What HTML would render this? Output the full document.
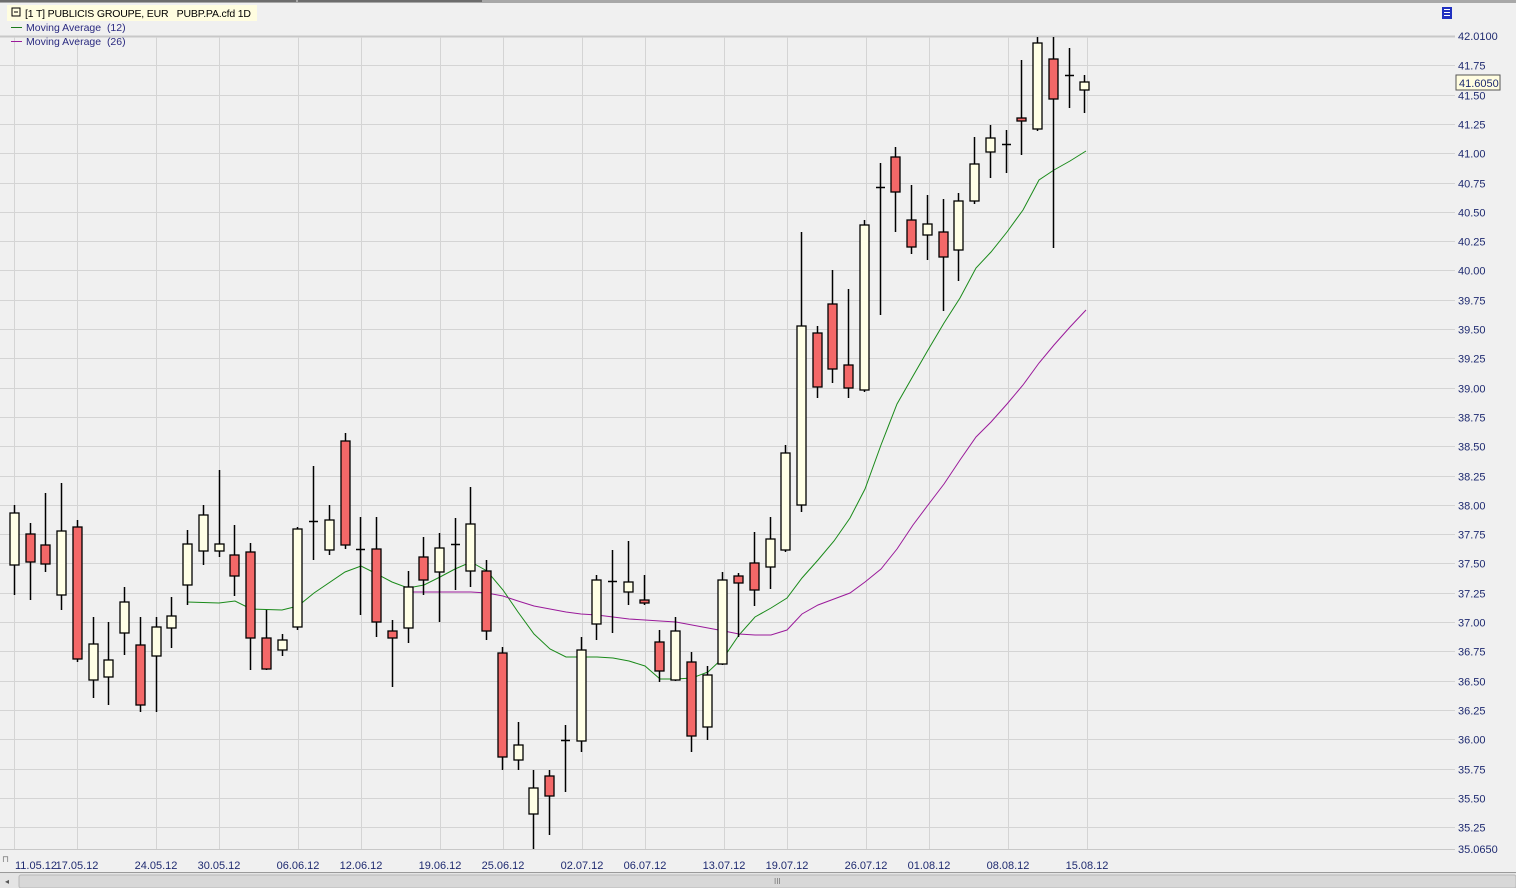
<!DOCTYPE html>
<html><head><meta charset="utf-8"><style>
html,body{margin:0;padding:0;background:#f0f0f0;width:1516px;height:888px;overflow:hidden;font-family:"Liberation Sans",Arial,sans-serif}
svg{position:absolute;left:0;top:0}
</style></head><body>
<svg id="s" width="1516" height="888" xmlns="http://www.w3.org/2000/svg" font-family="Liberation Sans, Arial, sans-serif">
<rect x="0" y="0" width="1516" height="888" fill="#f0f0f0"/>
<rect x="0" y="0" width="1516" height="3" fill="#a8a8a8"/>
<rect x="0" y="0" width="296" height="2" fill="#6d6d6d"/>
<rect x="298" y="0" width="184" height="2" fill="#6d6d6d"/>
<g id="grid"></g>
<g id="ma"></g>
<g id="c"></g>
<rect x="7" y="5" width="250" height="16" fill="#fffde0"/>
<rect x="12" y="8" width="8" height="8" fill="none" stroke="#000" stroke-width="1"/>
<line x1="14" y1="12" x2="18" y2="12" stroke="#000"/>
<text x="25" y="17" font-size="10.5" textLength="226" fill="#000">[1 T] PUBLICIS GROUPE, EUR &#160; PUBP.PA.cfd 1D</text>
<line x1="11" y1="27.5" x2="22" y2="27.5" stroke="#1a7a1a"/>
<text x="26" y="31" font-size="10.5" fill="#2a2a80">Moving Average &#160;(12)</text>
<line x1="11" y1="41.5" x2="22" y2="41.5" stroke="#9a1a9a"/>
<text x="26" y="45" font-size="10.5" fill="#2a2a80">Moving Average &#160;(26)</text>
<rect x="1442" y="7" width="10" height="12" fill="#2030c0"/>
<g stroke="#fff" stroke-width="1"><line x1="1444" y1="9.5" x2="1450" y2="9.5"/><line x1="1444" y1="12.5" x2="1450" y2="12.5"/><line x1="1444" y1="15.5" x2="1450" y2="15.5"/></g>
<g id="ax" font-size="11" fill="#1e2a70"></g>
<rect x="1456" y="75" width="44" height="15" fill="#fffde0" stroke="#555"/>
<text x="1459" y="87" font-size="11" fill="#1e2a70">41.6050</text>
<line x1="0" y1="872.5" x2="1516" y2="872.5" stroke="#9a9a9a"/>
<rect x="0" y="873" width="1516" height="15" fill="#e4e4e4"/>
<rect x="19" y="875" width="1497" height="13" rx="2" fill="#d8d8d8" stroke="#b8b8b8"/>
<text x="5" y="884" font-size="8" fill="#555">◂</text>
<text x="774" y="884" font-size="8" fill="#777">III</text>
<text x="2" y="862" font-size="9" fill="#777">⊓</text>
</svg>
<script>
const S='http://www.w3.org/2000/svg';
function el(p,t,a,txt){const e=document.createElementNS(S,t);for(const k in a)e.setAttribute(k,a[k]);if(txt)e.textContent=txt;document.getElementById(p).appendChild(e);return e;}
const Y=p=>37+(42-p)*117.2;
el('grid','line',{x1:0,y1:36.5,x2:1455,y2:36.5,stroke:'#c8c8c8','stroke-width':2});
el('ax','text',{x:1458,y:40},'42.0100');
for(let p=41.75;p>=35.2;p-=0.25){const y=Math.round(Y(p))-0.5;el('grid','line',{x1:0,y1:y,x2:1455,y2:y,stroke:'#d4d4d4'});el('ax','text',{x:1458,y:y+4},p.toFixed(2));}
el('grid','line',{x1:0,y1:849.5,x2:1455,y2:849.5,stroke:'#c8c8c8'});
el('ax','text',{x:1458,y:853},'35.0650');
const vx=[14,77,156,219,298,361,440,503,582,645,724,787,866,929,1008,1087];
const dl=['11.05.12','17.05.12','24.05.12','30.05.12','06.06.12','12.06.12','19.06.12','25.06.12','02.07.12','06.07.12','13.07.12','19.07.12','26.07.12','01.08.12','08.08.12','15.08.12'];
vx.forEach((x,i)=>{el('grid','line',{x1:x+0.5,y1:37,x2:x+0.5,y2:849,stroke:'#d4d4d4'});el('ax','text',{x:x+ (i==0?1:0),y:869,'text-anchor':i==0?'start':'middle'},dl[i]);});
const C=[['w',513,565,505,595],['r',534,562,523,600],['r',545,564,493,572],['w',531,595,483,610],['r',527,659,520,662],['w',644,680,617,698],['w',660,677,622,705],['w',602,633,587,655],['r',645,705,617,712],['w',627,656,617,712],['w',616,628,597,648],['w',544,585,530,605],['w',515,551,505,565],['w',544,551,470,557],['r',555,576,525,596],['r',552,638,543,670],['r',638,669,610,670],['w',640,650,634,656],['w',529,627,527,630],['r',521,523,466,560],['w',520,550,505,555],['r',441,545,433,549],['w',549,550,517,615],['r',549,622,517,637],['r',631,638,620,687],['w',587,628,571,643],['r',557,580,537,595],['w',548,572,533,622],['w',544,546,518,590],['w',524,571,487,587],['r',571,631,560,640],['r',653,757,647,770],['w',745,760,722,770],['w',788,814,770,849],['r',776,796,770,835],['w',740,741,725,792],['w',650,741,637,752],['w',580,624,575,640],['w',581,582,550,633],['w',582,592,541,605],['r',600,603,575,605],['r',642,671,630,682],['w',631,680,617,681],['r',662,736,652,752],['w',675,727,666,740],['w',580,664,572,665],['r',576,583,573,637],['r',563,590,532,606],['w',539,567,517,589],['w',453,550,445,552],['w',326,505,232,512],['r',333,387,326,398],['r',304,369,270,383],['r',365,388,289,398],['w',225,390,220,392],['w',187,188,163,315],['r',157,192,147,232],['r',220,247,185,254],['w',224,235,195,260],['r',232,257,199,311],['w',201,250,193,281],['w',164,201,137,204],['w',138,152,125,178],['w',144,146,130,173],['r',118,121,60,155],['w',43,129,37,131],['r',59,99,37,248],['w',75,76,48,108],['w',82,90,75,113]];
C.forEach((c,i)=>{const x=Math.round(14+15.74*i);
el('c','line',{x1:x+0.5,y1:c[3],x2:x+0.5,y2:c[4],stroke:'#000','stroke-width':1.5});
const h=c[2]-c[1];
if(h<=2){el('c','line',{x1:x-4,y1:c[1]+0.5,x2:x+5,y2:c[1]+0.5,stroke:'#000','stroke-width':1.5});}
else el('c','rect',{x:x-4,y:c[1],width:9,height:h,fill:c[0]=='w'?'#ffffe6':'#f36868',stroke:'#000','stroke-width':1.3});
});
const g=[[187,602],[219,603],[235,601],[251,609],[282,610],[298,606],[314,593],[345,572],[361,566],[377,574],[392,582],[408,588],[424,585],[440,577],[455,569],[471,562],[487,571],[503,590],[518,612],[534,634],[550,649],[566,657],[581,657],[597,657],[613,658],[629,661],[645,666],[660,679],[676,679],[692,678],[708,672],[724,657],[739,635],[755,617],[771,608],[787,598],[802,578],[818,560],[834,541],[850,518],[865,489],[881,445],[897,404],[913,376],[928,350],[944,323],[960,298],[976,268],[991,252],[1007,232],[1023,210],[1039,180],[1054,170],[1070,161],[1086,151]];
const m=[[408,592],[424,592],[440,592],[455,592],[471,592],[487,593],[503,596],[518,601],[534,606],[550,609],[566,612],[581,614],[597,615],[613,617],[629,619],[645,620],[660,621],[676,622],[692,625],[708,628],[724,631],[739,634],[755,635],[771,635],[787,630],[802,614],[818,605],[834,599],[850,593],[865,582],[881,569],[897,549],[913,525],[928,505],[944,484],[960,460],[976,437],[991,422],[1007,404],[1023,385],[1039,363],[1054,345],[1070,327],[1086,310]];
el('ma','polyline',{points:g.map(p=>p.join(',')).join(' '),fill:'none',stroke:'#1a8a1a','stroke-width':1});
el('ma','polyline',{points:m.map(p=>p.join(',')).join(' '),fill:'none',stroke:'#9a1a9a','stroke-width':1});
</script>
</body></html>
